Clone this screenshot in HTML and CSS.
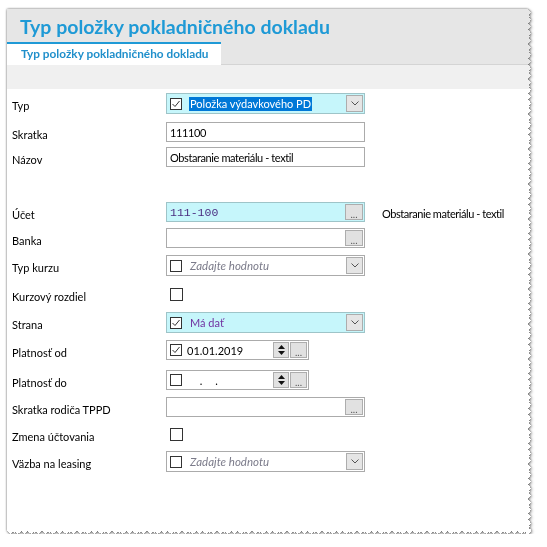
FILE: index.html
```html
<!DOCTYPE html>
<html lang="sk">
<head>
<meta charset="UTF-8">
<title>Typ položky pokladničného dokladu</title>
<link rel="stylesheet" href="styles.css">
</head>
<body>
<div class="paper">
  <div class="window">
    <div class="header">
      <h1 class="title">Typ položky pokladničného dokladu</h1>
      <div class="tabs">
        <div class="tab">Typ položky pokladničného dokladu</div>
        <div class="tab-rest"></div>
      </div>
    </div>
    <div class="toolbar"></div>

    <div class="form">
      <div class="row r29">
        <span class="label">Typ</span>
        <div class="combo cyan">
          <span class="check"><svg width="10" height="10" viewBox="0 0 10 10"><polyline points="1.5,5 4,7.5 8.5,2" /></svg></span>
          <span class="value selected">Položka výdavkového PD</span>
          <span class="drop"><svg width="8" height="5" viewBox="0 0 8 5"><polyline points="0.5,0.5 4,4 7.5,0.5" /></svg></span>
        </div>
      </div>
      <div class="row r25">
        <span class="label">Skratka</span>
        <div class="field">111100</div>
      </div>
      <div class="row">
        <span class="label">Názov</span>
        <div class="field">Obstaranie materiálu - textil</div>
      </div>
      <div class="row r28"></div>
      <div class="row r26">
        <span class="label">Účet</span>
        <div class="field cyan">
          <span class="mono">111-100</span>
          <span class="dots">...</span>
        </div>
        <span class="note">Obstaranie materiálu - textil</span>
      </div>
      <div class="row">
        <span class="label">Banka</span>
        <div class="field">
          <span class="dots">...</span>
        </div>
      </div>
      <div class="row r29">
        <span class="label">Typ kurzu</span>
        <div class="combo">
          <span class="check"></span>
          <span class="value hint">Zadajte hodnotu</span>
          <span class="drop"><svg width="8" height="5" viewBox="0 0 8 5"><polyline points="0.5,0.5 4,4 7.5,0.5" /></svg></span>
        </div>
      </div>
      <div class="row r28">
        <span class="label">Kurzový rozdiel</span>
        <span class="check solo"></span>
      </div>
      <div class="row r28">
        <span class="label">Strana</span>
        <div class="combo cyan">
          <span class="check"><svg width="10" height="10" viewBox="0 0 10 10"><polyline points="1.5,5 4,7.5 8.5,2" /></svg></span>
          <span class="value purple">Má dať</span>
          <span class="drop"><svg width="8" height="5" viewBox="0 0 8 5"><polyline points="0.5,0.5 4,4 7.5,0.5" /></svg></span>
        </div>
      </div>
      <div class="row r30">
        <span class="label">Platnosť od</span>
        <div class="date">
          <span class="check"><svg width="10" height="10" viewBox="0 0 10 10"><polyline points="1.5,5 4,7.5 8.5,2" /></svg></span>
          <span class="day">01.01.2019</span>
          <span class="spin">
            <svg width="7" height="4" viewBox="0 0 7 4"><polygon points="3.5,0 7,4 0,4" /></svg>
            <svg width="7" height="4" viewBox="0 0 7 4"><polygon points="0,0 7,0 3.5,4" /></svg>
          </span>
          <span class="dots">...</span>
        </div>
      </div>
      <div class="row">
        <span class="label">Platnosť do</span>
        <div class="date">
          <span class="check"></span>
          <span class="day"><span class="blank">01</span>.<span class="blank">01</span>.</span>
          <span class="spin">
            <svg width="7" height="4" viewBox="0 0 7 4"><polygon points="3.5,0 7,4 0,4" /></svg>
            <svg width="7" height="4" viewBox="0 0 7 4"><polygon points="0,0 7,0 3.5,4" /></svg>
          </span>
          <span class="dots">...</span>
        </div>
      </div>
      <div class="row">
        <span class="label">Skratka rodiča TPPD</span>
        <div class="field">
          <span class="dots">...</span>
        </div>
      </div>
      <div class="row">
        <span class="label">Zmena účtovania</span>
        <span class="check solo"></span>
      </div>
      <div class="row">
        <span class="label">Väzba na leasing</span>
        <div class="combo">
          <span class="check"></span>
          <span class="value hint">Zadajte hodnotu</span>
          <span class="drop"><svg width="8" height="5" viewBox="0 0 8 5"><polyline points="0.5,0.5 4,4 7.5,0.5" /></svg></span>
        </div>
      </div>
    </div>
  </div>
</div>
</body>
</html>
```

FILE: styles.css
```css
body {
    margin: 0;
    background: white;
    font-family: Lato, "Liberation Sans", sans-serif;
    font-size: 11px;
    color: #000;
}
.paper {
    padding: 9px 0 0 7px;
    filter: drop-shadow(0 0 1px rgba(0, 0, 0, 0.5)) drop-shadow(1px 1px 1.5px rgba(0, 0, 0, 0.35));
}
/* torn edge on the right and bottom: two zigzags of different pitch */
.window {
    width: 524px;
    height: 525px;
    background: white;
    -webkit-mask:
        linear-gradient(#000 0 0) left top / calc(100% - 5px) calc(100% - 5px) no-repeat,
        conic-gradient(from 225deg at right, #000 90deg, #0000 0) right 1px top / 4px 5px repeat-y,
        conic-gradient(from 225deg at right, #000 90deg, #0000 0) right top / 5px 7px repeat-y,
        conic-gradient(from -45deg at bottom, #000 90deg, #0000 0) left bottom 1px / 5px 4px repeat-x,
        conic-gradient(from -45deg at bottom, #000 90deg, #0000 0) left bottom / 7px 5px repeat-x;
    mask:
        linear-gradient(#000 0 0) left top / calc(100% - 5px) calc(100% - 5px) no-repeat,
        conic-gradient(from 225deg at right, #000 90deg, #0000 0) right 1px top / 4px 5px repeat-y,
        conic-gradient(from 225deg at right, #000 90deg, #0000 0) right top / 5px 7px repeat-y,
        conic-gradient(from -45deg at bottom, #000 90deg, #0000 0) left bottom 1px / 5px 4px repeat-x,
        conic-gradient(from -45deg at bottom, #000 90deg, #0000 0) left bottom / 7px 5px repeat-x;
}
.header {
    background: #e6e6e6;
}
.title {
    margin: 0;
    height: 33px;
    padding-left: 13px;
    font-size: 19.5px;
    font-weight: 700;
    line-height: 36px;
    color: #1f9ad6;
}
.tabs {
    display: flex;
    height: 23px;
}
.tab {
    width: 214px;
    background: white;
    border-top: 2px solid #1f9ad6;
    padding-left: 14px;
    box-sizing: border-box;
    font-size: 11.8px;
    font-weight: 700;
    line-height: 20px;
    color: #1f8fcb;
}
.tab-rest {
    flex: 1;
    border-bottom: 1px solid #d4d4d4;
}
.toolbar {
    height: 24px;
    background: #f0f0f0;
}
.form {
    padding: 4px 0 0 5px;
}
.row {
    display: flex;
    align-items: flex-start;
    height: 27px;
}
.r25 { height: 25px; }
.r26 { height: 26px; }
.r28 { height: 28px; }
.r29 { height: 29px; }
.r30 { height: 30px; }
.label {
    width: 154px;
    padding-top: 3px;
    line-height: 20px;
}
.field, .combo, .date {
    display: flex;
    align-items: center;
    width: 199px;
    height: 20px;
    box-sizing: border-box;
    border: 1px solid #ababab;
    padding: 0 1px 0 3px;
    background: white;
    white-space: nowrap;
}
.field {
    letter-spacing: -0.4px;
}
.combo {
    height: 21px;
}
.date {
    width: 143px;
}
.cyan {
    background: #c6f6fb;
    border-color: #9ec4c8;
}
.check {
    display: flex;
    align-items: center;
    justify-content: center;
    width: 12px;
    height: 12px;
    box-sizing: border-box;
    border: 1px solid #333;
    background: white;
    flex: none;
}
.check svg {
    fill: none;
    stroke: #333;
    stroke-width: 1;
}
.check.solo {
    width: 13px;
    height: 13px;
    margin: 4px 0 0 4px;
}
.value {
    margin-left: 7px;
    padding: 0 1px;
    line-height: 14px;
}
.selected {
    background: #0078d7;
    color: white;
}
.hint {
    font-style: italic;
    font-size: 11.5px;
    color: #7b7b8a;
}
.purple {
    color: #7030a0;
}
.mono {
    font-family: "Liberation Mono", monospace;
    font-size: 11.5px;
    letter-spacing: 0;
    color: #4a2d80;
}
.drop {
    margin-left: auto;
    display: flex;
    align-items: center;
    justify-content: center;
    width: 17px;
    height: 17px;
    box-sizing: border-box;
    background: #e5e5e5;
    border: 1px solid #adadad;
}
.drop svg {
    fill: none;
    stroke: #555;
    stroke-width: 1;
}
.dots {
    margin-left: auto;
    display: flex;
    align-items: flex-end;
    justify-content: center;
    width: 18px;
    height: 16px;
    box-sizing: border-box;
    background: #e1e1e1;
    border: 1px solid #adadad;
    font-size: 10px;
    line-height: 10px;
    letter-spacing: 0;
    color: #555;
}
.note {
    margin-left: 17px;
    padding-top: 2px;
    line-height: 20px;
    letter-spacing: -0.45px;
}
.day {
    margin-left: 5px;
}
.blank {
    visibility: hidden;
}
.date .spin {
    margin-left: auto;
    display: flex;
    flex-direction: column;
    align-items: center;
    justify-content: space-around;
    width: 16px;
    height: 16px;
    box-sizing: border-box;
    background: #e1e1e1;
    border: 1px solid #adadad;
    padding: 1px 0;
}
.spin svg {
    fill: #111;
}
.date .dots {
    margin-left: 1px;
    width: 17px;
}
```
